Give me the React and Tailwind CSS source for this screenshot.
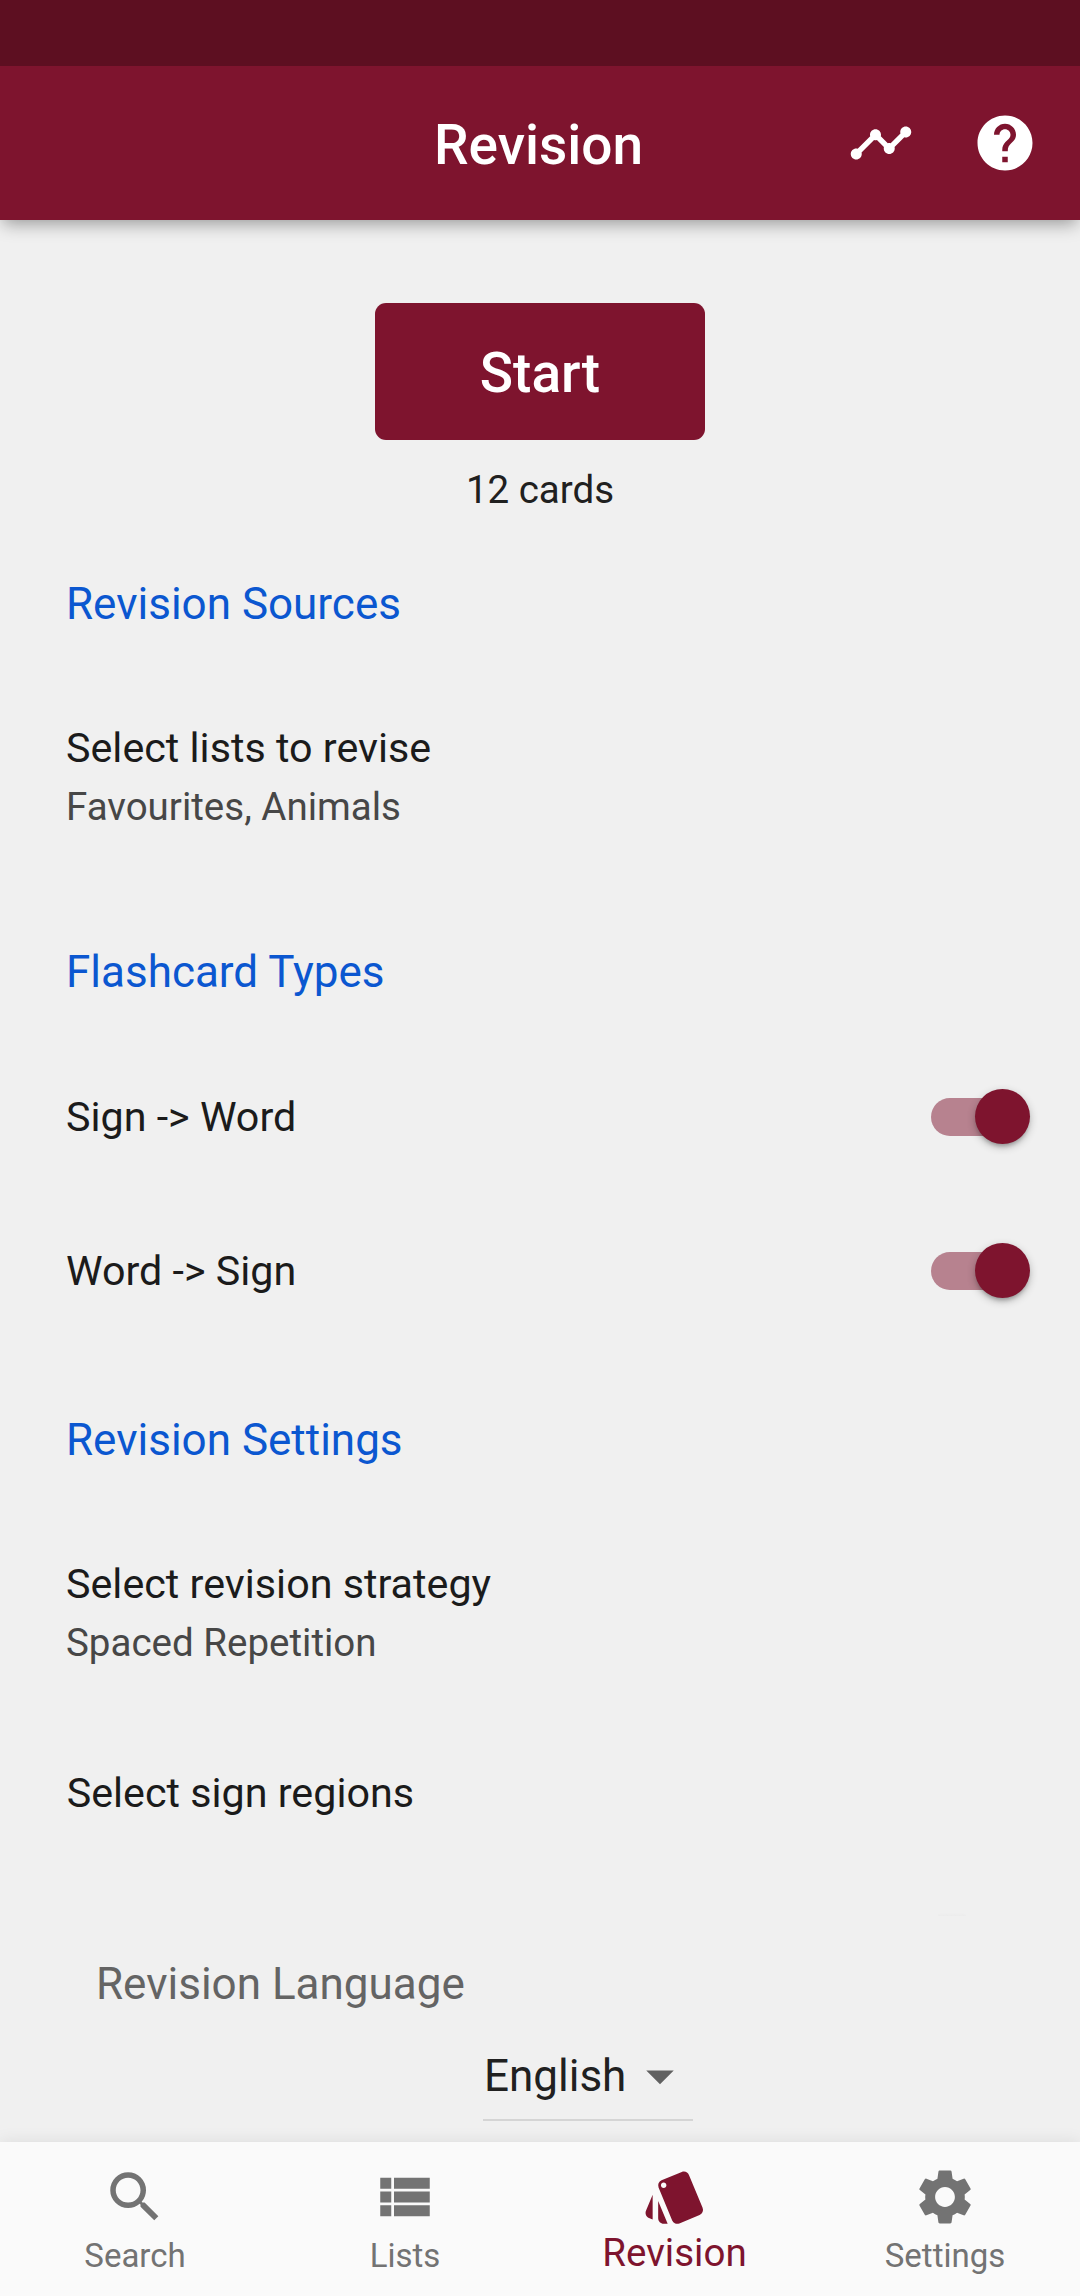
import React, { useState } from "react";
import { MdTimeline, MdHelp, MdSearch, MdStyle, MdSettings, MdArrowDropDown } from "react-icons/md";

function ViewListIcon({ className }) {
  return (
    <svg viewBox="0 0 24 24" fill="currentColor" className={className}>
      <path d="M3 14h4v-4H3v4zm0 5h4v-4H3v4zM3 9h4V5H3v4zm5 5h13v-4H8v4zm0 5h13v-4H8v4zM8 5v4h13V5H8z" />
    </svg>
  );
}

function Header() {
  return (
    <header className="relative z-10 shrink-0 bg-[#7e142e] text-white shadow-[0_7px_16px_-3px_rgba(0,0,0,0.36)]">
      <div className="h-[66px] bg-[#5d0f21]" />
      <div className="grid h-[154px] grid-cols-[1fr_auto_1fr] items-center">
        <h1 className="col-start-2 pt-[4px] pr-[3px] text-[55px] leading-[64px] font-medium">Revision</h1>
        <div className="flex items-center justify-end gap-[57.5px] pr-[42.5px]">
          <button aria-label="Progress"><MdTimeline className="size-[66px]" /></button>
          <button aria-label="Help"><MdHelp className="size-[66px]" /></button>
        </div>
      </div>
    </header>
  );
}

function SectionTitle({ children }) {
  return <h2 className="text-[44px] leading-[52px] text-[#0b57d0]">{children}</h2>;
}

function Row({ title, subtitle }) {
  return (
    <div>
      <div className="text-[41.25px] leading-[48px] text-[#1b1b1b]">{title}</div>
      {subtitle && <div className="mt-3 text-[38.5px] leading-[45px] text-[#474747]">{subtitle}</div>}
    </div>
  );
}

function ToggleRow({ title }) {
  const [on, setOn] = useState(true);
  return (
    <div className="flex h-[154px] items-center justify-between">
      <span className="text-[41.25px] leading-[48px] text-[#1b1b1b]">{title}</span>
      <button
        role="switch"
        aria-checked={on}
        aria-label={title}
        onClick={() => setOn(!on)}
        className={on ? "mr-[0.3px] mb-[0.5px] flex h-[38.5px] w-[90.5px] items-center justify-end rounded-full bg-[#7e142e]/50" : "mr-[0.3px] mb-[0.5px] flex h-[38.5px] w-[90.5px] items-center justify-start rounded-full bg-black/30"}
      >
        <span className="-mr-[8.3px] size-[55px] shrink-0 rounded-full bg-[#7e142e] shadow-[0_4px_4px_-2px_rgba(0,0,0,0.25),0_3px_8px_0_rgba(0,0,0,0.24)]" />
      </button>
    </div>
  );
}

const tabs = [
  { label: "Search", Icon: MdSearch },
  { label: "Lists", Icon: ViewListIcon },
  { label: "Revision", Icon: MdStyle, active: true },
  { label: "Settings", Icon: MdSettings },
];

function BottomNav() {
  return (
    <nav className="relative z-10 grid h-[154px] shrink-0 grid-cols-4 bg-[#fafafa] shadow-[0_0_16px_0_rgba(0,0,0,0.09)]">
      {tabs.map(({ label, Icon, active }) => (
        <button
          key={label}
          className={active ? "flex flex-col items-center pt-[22px] text-[#7e142e]" : "flex flex-col items-center pt-[22px] text-[#737373]"}
        >
          <Icon className="size-[66px]" />
          <span className={active ? "pr-px text-[38.5px] leading-[45px]" : "mt-[6px] text-[33px] leading-[39px]"}>{label}</span>
        </button>
      ))}
    </nav>
  );
}

export default function App() {
  return (
    <div className="flex h-[2296px] w-[1080px] flex-col overflow-hidden bg-[#f0f0f0] font-[Roboto,sans-serif]">
      <Header />
      <main className="flex flex-1 flex-col pr-[58px] pl-[66px]">
        <div className="-mr-[58px] -ml-[66px] flex flex-col items-center pt-[82.5px]">
          <button className="h-[137.5px] w-[330px] rounded-[11px] bg-[#7e142e] pt-[3px] text-[55px] leading-[64px] font-medium text-white">
            Start
          </button>
          <div className="mt-[27px] text-[38.5px] leading-[45px] text-[#202020]">12 cards</div>
        </div>

        <section className="mt-[66px]">
          <SectionTitle>Revision Sources</SectionTitle>
          <div className="mt-[94px]">
            <Row title="Select lists to revise" subtitle="Favourites, Animals" />
          </div>
        </section>

        <section className="mt-[117px]">
          <SectionTitle>Flashcard Types</SectionTitle>
          <div className="mt-[42px]">
            <ToggleRow title="Sign -> Word" />
            <ToggleRow title="Word -> Sign" />
          </div>
        </section>

        <section className="mt-[66px]">
          <SectionTitle>Revision Settings</SectionTitle>
          <div className="mt-[94px] flex flex-col gap-[104px]">
            <Row title="Select revision strategy" subtitle="Spaced Repetition" />
            <div className="pl-[0.7px]"><Row title="Select sign regions" /></div>
          </div>
        </section>

        <div className="mt-[96px] mr-[56px] h-[3px] w-[28px] self-end rounded-t-full bg-gradient-to-b from-transparent to-[#ececec]" />

        <section className="mt-[42px] pl-[30px]">
          <div className="text-[44px] leading-[52px] text-[#646464]">Revision Language</div>
          <button className="mt-[33px] ml-[387px] flex h-[78px] w-[210px] items-start border-b-2 border-[#d5d5d5] pl-px text-[#202020]">
            <span className="mt-[7px] text-[44px] leading-[52px]">English</span>
            <MdArrowDropDown className="ml-auto size-[66px] text-[#616161]" />
          </button>
        </section>
      </main>
      <BottomNav />
    </div>
  );
}
